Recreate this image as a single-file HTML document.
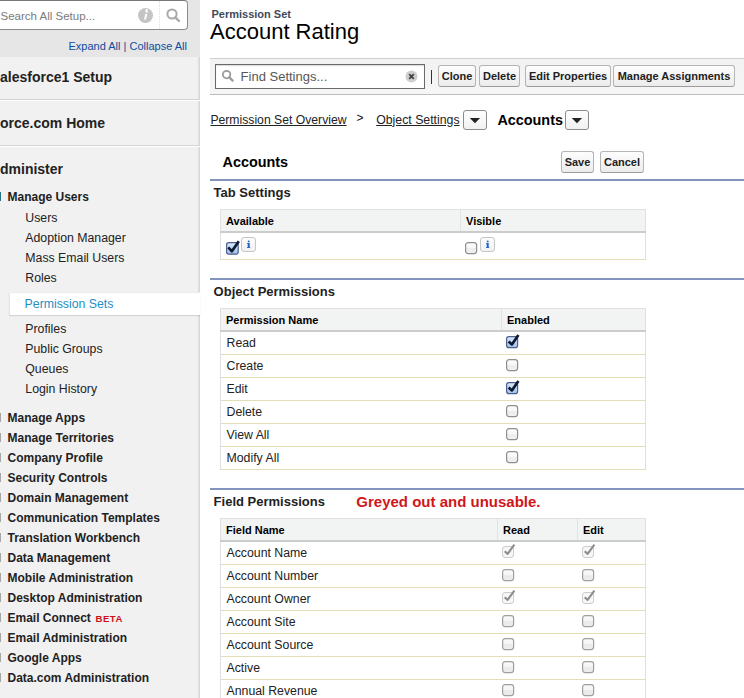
<!DOCTYPE html>
<html><head><meta charset="utf-8"><style>
html,body{margin:0;padding:0;width:744px;height:698px;overflow:hidden;background:#fff;position:relative;font-family:"Liberation Sans", sans-serif}
.t{position:absolute;white-space:nowrap}
.btn{position:absolute;box-sizing:border-box;border:1px solid #b5b5b5;border-bottom-color:#9c9c9c;border-radius:3px;background:linear-gradient(#fdfdfd,#ececec);color:#222;font-weight:bold;text-align:center;white-space:nowrap;font-family:"Liberation Sans", sans-serif}
.info{position:absolute;width:14px;height:14px;box-sizing:border-box;border:1px solid #cfcfcf;border-radius:3px;background:linear-gradient(#fbfbfb,#ececec);color:#1560c0;font:bold 11px/12px "Liberation Serif",serif;text-align:center}
</style></head><body>
<svg width="0" height="0" style="position:absolute"><defs><linearGradient id="gb" x1="0" y1="0" x2="0" y2="1"><stop offset="0" stop-color="#dbeafc"/><stop offset="1" stop-color="#9ec2ee"/></linearGradient><linearGradient id="gg" x1="0" y1="0" x2="0" y2="1"><stop offset="0" stop-color="#fefefe"/><stop offset="0.5" stop-color="#f6f6f6"/><stop offset="0.55" stop-color="#ececec"/><stop offset="1" stop-color="#f2f2f2"/></linearGradient><linearGradient id="gi" x1="0" y1="0" x2="0" y2="1"><stop offset="0" stop-color="#fdfdfd"/><stop offset="1" stop-color="#f1f1f1"/></linearGradient><linearGradient id="gd" x1="0" y1="0" x2="0" y2="1"><stop offset="0" stop-color="#fafafa"/><stop offset="0.5" stop-color="#f4f4f4"/><stop offset="0.55" stop-color="#e9e9e9"/><stop offset="1" stop-color="#efefef"/></linearGradient></defs></svg>
<div style="position:absolute;left:0px;top:0px;width:200px;height:57px;background:#e6e6e6"></div>
<div style="position:absolute;left:0px;top:57px;width:200px;height:641px;background:#f1f1f1"></div>
<div style="position:absolute;left:197px;top:57px;width:2px;height:641px;background:linear-gradient(90deg,#efefef,#e2e2e2)"></div>
<div style="position:absolute;left:199px;top:57px;width:1px;height:641px;background:#d6d6d6"></div>
<div style="position:absolute;left:-10px;top:0px;width:196px;height:28px;background:#fff;border:1px solid #8c8c8c;border-top-color:#777;border-radius:0 4px 4px 0;box-sizing:content-box"></div>
<div style="position:absolute;left:159px;top:1px;width:0px;height:28px;border-left:1px dotted #dedede"></div>
<div class="t" style="left:0.5px;top:11.07px;font-size:11.5px;line-height:11.5px;font-weight:normal;color:#7a7a7a;">Search All Setup...</div>
<svg style="position:absolute;left:137px;top:7px" width="17" height="17" viewBox="0 0 17 17"><circle cx="8.5" cy="8.5" r="7.5" fill="#c4c4c4"/><path d="M9.6 4.2a1.1 1.1 0 1 1 0.01 0z" fill="#fff"/><circle cx="9.6" cy="4.6" r="1.2" fill="#fff"/><path d="M8.3 7 L10.3 7 L9 12.6 L7 12.6 Z" fill="#fff"/></svg>
<svg style="position:absolute;left:165px;top:7px" width="17" height="17" viewBox="0 0 17 17"><circle cx="7" cy="7" r="4.6" fill="none" stroke="#a9a9a9" stroke-width="2"/><path d="M10.3 10.3 L14 14" stroke="#a9a9a9" stroke-width="2.4" stroke-linecap="round"/></svg>
<div class="t" style="left:68.5px;top:40.79px;font-size:11px;line-height:11px;font-weight:normal;color:#0f4c9c;">Expand All <span style="color:#0f4c9c">|</span> Collapse All</div>
<div style="position:absolute;left:0px;top:99px;width:200px;height:1px;background:#d3d3d3"></div>
<div style="position:absolute;left:0px;top:100px;width:200px;height:1px;background:#fff"></div>
<div style="position:absolute;left:0px;top:145px;width:200px;height:1px;background:#d3d3d3"></div>
<div style="position:absolute;left:0px;top:146px;width:200px;height:1px;background:#fff"></div>
<div class="t" style="left:0px;top:70.15px;font-size:14px;line-height:14px;font-weight:bold;color:#222;">alesforce1 Setup</div>
<div class="t" style="left:0px;top:116.15px;font-size:14px;line-height:14px;font-weight:bold;color:#222;">orce.com Home</div>
<div class="t" style="left:0px;top:161.65px;font-size:14px;line-height:14px;font-weight:bold;color:#222;">dminister</div>
<div style="position:absolute;left:0px;top:192px;width:1px;height:9px;background:#2a7080"></div>
<div class="t" style="left:7.5px;top:190.84px;font-size:12px;line-height:12px;font-weight:bold;color:#222;">Manage Users</div>
<div class="t" style="left:25.3px;top:211.59px;font-size:12.3px;line-height:12.3px;font-weight:normal;color:#222;">Users</div>
<div class="t" style="left:25.3px;top:231.59px;font-size:12.3px;line-height:12.3px;font-weight:normal;color:#222;">Adoption Manager</div>
<div class="t" style="left:25.3px;top:251.59px;font-size:12.3px;line-height:12.3px;font-weight:normal;color:#222;">Mass Email Users</div>
<div class="t" style="left:25.3px;top:271.59px;font-size:12.3px;line-height:12.3px;font-weight:normal;color:#222;">Roles</div>
<div style="position:absolute;left:8.5px;top:291.5px;width:191.5px;height:23.5px;background:#fff;box-shadow:0 1px 1px rgba(0,0,0,0.12);border-left:1px solid #e6e6e6;border-top:1px solid #ececec;box-sizing:border-box"></div>
<div class="t" style="left:24.6px;top:297.59px;font-size:12.3px;line-height:12.3px;font-weight:normal;color:#1f8fc4;">Permission Sets</div>
<div class="t" style="left:25.3px;top:322.59px;font-size:12.3px;line-height:12.3px;font-weight:normal;color:#222;">Profiles</div>
<div class="t" style="left:25.3px;top:342.59px;font-size:12.3px;line-height:12.3px;font-weight:normal;color:#222;">Public Groups</div>
<div class="t" style="left:25.3px;top:362.59px;font-size:12.3px;line-height:12.3px;font-weight:normal;color:#222;">Queues</div>
<div class="t" style="left:25.3px;top:382.59px;font-size:12.3px;line-height:12.3px;font-weight:normal;color:#222;">Login History</div>
<div style="position:absolute;left:0px;top:413px;width:1px;height:9px;background:#a6a6a6"></div>
<div class="t" style="left:7.5px;top:411.84px;font-size:12px;line-height:12px;font-weight:bold;color:#222;">Manage Apps</div>
<div style="position:absolute;left:0px;top:433px;width:1px;height:9px;background:#a6a6a6"></div>
<div class="t" style="left:7.5px;top:431.84px;font-size:12px;line-height:12px;font-weight:bold;color:#222;">Manage Territories</div>
<div style="position:absolute;left:0px;top:453px;width:1px;height:9px;background:#a6a6a6"></div>
<div class="t" style="left:7.5px;top:451.84px;font-size:12px;line-height:12px;font-weight:bold;color:#222;">Company Profile</div>
<div style="position:absolute;left:0px;top:473px;width:1px;height:9px;background:#a6a6a6"></div>
<div class="t" style="left:7.5px;top:471.84px;font-size:12px;line-height:12px;font-weight:bold;color:#222;">Security Controls</div>
<div style="position:absolute;left:0px;top:493px;width:1px;height:9px;background:#a6a6a6"></div>
<div class="t" style="left:7.5px;top:491.84px;font-size:12px;line-height:12px;font-weight:bold;color:#222;">Domain Management</div>
<div style="position:absolute;left:0px;top:513px;width:1px;height:9px;background:#a6a6a6"></div>
<div class="t" style="left:7.5px;top:511.84px;font-size:12px;line-height:12px;font-weight:bold;color:#222;">Communication Templates</div>
<div style="position:absolute;left:0px;top:533px;width:1px;height:9px;background:#a6a6a6"></div>
<div class="t" style="left:7.5px;top:531.84px;font-size:12px;line-height:12px;font-weight:bold;color:#222;">Translation Workbench</div>
<div style="position:absolute;left:0px;top:553px;width:1px;height:9px;background:#a6a6a6"></div>
<div class="t" style="left:7.5px;top:551.84px;font-size:12px;line-height:12px;font-weight:bold;color:#222;">Data Management</div>
<div style="position:absolute;left:0px;top:573px;width:1px;height:9px;background:#a6a6a6"></div>
<div class="t" style="left:7.5px;top:571.84px;font-size:12px;line-height:12px;font-weight:bold;color:#222;">Mobile Administration</div>
<div style="position:absolute;left:0px;top:593px;width:1px;height:9px;background:#a6a6a6"></div>
<div class="t" style="left:7.5px;top:591.84px;font-size:12px;line-height:12px;font-weight:bold;color:#222;">Desktop Administration</div>
<div style="position:absolute;left:0px;top:613px;width:1px;height:9px;background:#a6a6a6"></div>
<div class="t" style="left:7.5px;top:611.84px;font-size:12px;line-height:12px;font-weight:bold;color:#222;">Email Connect</div>
<div style="position:absolute;left:0px;top:633px;width:1px;height:9px;background:#a6a6a6"></div>
<div class="t" style="left:7.5px;top:631.84px;font-size:12px;line-height:12px;font-weight:bold;color:#222;">Email Administration</div>
<div style="position:absolute;left:0px;top:653px;width:1px;height:9px;background:#a6a6a6"></div>
<div class="t" style="left:7.5px;top:651.84px;font-size:12px;line-height:12px;font-weight:bold;color:#222;">Google Apps</div>
<div style="position:absolute;left:0px;top:673px;width:1px;height:9px;background:#a6a6a6"></div>
<div class="t" style="left:7.5px;top:671.84px;font-size:12px;line-height:12px;font-weight:bold;color:#222;">Data.com Administration</div>
<div class="t" style="left:95.5px;top:614.47px;font-size:9.6px;line-height:9.6px;font-weight:bold;color:#cc1019;letter-spacing:0.5px">BETA</div>
<div class="t" style="left:211.5px;top:9.29px;font-size:11px;line-height:11px;font-weight:bold;color:#3f4a5a;">Permission Set</div>
<div class="t" style="left:210px;top:21.08px;font-size:22px;line-height:22px;font-weight:normal;color:#000;">Account Rating</div>
<div style="position:absolute;left:210px;top:58px;width:534px;height:37px;background:linear-gradient(#f2f2f2,#f6f6f6);border-top:1px solid #cfcfcf;border-bottom:1px solid #bdbdbd;box-sizing:border-box"></div>
<div style="position:absolute;left:215px;top:64px;width:210px;height:25px;background:#fff;border:1px solid #6a6a6a;box-sizing:border-box;box-shadow:inset 0 1px 1px rgba(0,0,0,0.15)"></div>
<svg style="position:absolute;left:221px;top:69px" width="14" height="14" viewBox="0 0 14 14"><circle cx="5.6" cy="5.6" r="3.7" fill="none" stroke="#999" stroke-width="1.8"/><path d="M8.3 8.3 L11.6 11.6" stroke="#999" stroke-width="2.2" stroke-linecap="round"/></svg>
<div class="t" style="left:240.6px;top:70.00px;font-size:13px;line-height:13px;font-weight:normal;color:#575757;">Find Settings...</div>
<svg style="position:absolute;left:405px;top:70px" width="13" height="13" viewBox="0 0 13 13"><circle cx="6.5" cy="6.5" r="6" fill="#cfcfcf"/><path d="M4.2 4.2 L8.8 8.8 M8.8 4.2 L4.2 8.8" stroke="#444" stroke-width="1.8"/></svg>
<div style="position:absolute;left:431px;top:70px;width:1px;height:14px;background:#333"></div>
<div class="btn" style="left:438px;top:65px;width:38px;height:22px;font-size:11px;line-height:20px">Clone</div>
<div class="btn" style="left:479px;top:65px;width:41px;height:22px;font-size:11px;line-height:20px">Delete</div>
<div class="btn" style="left:525px;top:65px;width:86px;height:22px;font-size:11px;line-height:20px">Edit Properties</div>
<div class="btn" style="left:613px;top:65px;width:122px;height:22px;font-size:11px;line-height:20px">Manage Assignments</div>
<div class="t" style="left:210.4px;top:113.67px;font-size:12.2px;line-height:12.2px;font-weight:normal;color:#222;text-decoration:underline">Permission Set Overview</div>
<div class="t" style="left:356.5px;top:112.14px;font-size:12px;line-height:12px;font-weight:normal;color:#111;">&gt;</div>
<div class="t" style="left:376.2px;top:113.59px;font-size:12.3px;line-height:12.3px;font-weight:normal;color:#222;text-decoration:underline">Object Settings</div>
<div class="btn" style="left:463px;top:110px;width:24px;height:20px;border-color:#8c8c8c;background:linear-gradient(#fefefe,#f1f1f1)"><svg width="24" height="20" style="position:absolute;left:-1px;top:-1px"><path d="M6.8 8 L17.1 8 L11.95 13.2 Z" fill="#222"/></svg></div>
<div class="t" style="left:497.4px;top:112.81px;font-size:14.4px;line-height:14.4px;font-weight:bold;color:#000;">Accounts</div>
<div class="btn" style="left:565px;top:110px;width:24px;height:20px;border-color:#8c8c8c;background:linear-gradient(#fefefe,#f1f1f1)"><svg width="24" height="20" style="position:absolute;left:-1px;top:-1px"><path d="M6.8 8 L17.1 8 L11.95 13.2 Z" fill="#222"/></svg></div>
<div class="t" style="left:222.5px;top:154.81px;font-size:14.4px;line-height:14.4px;font-weight:bold;color:#000;">Accounts</div>
<div class="btn" style="left:561px;top:151px;width:33px;height:22px;font-size:11px;line-height:20px">Save</div>
<div class="btn" style="left:600px;top:151px;width:44px;height:22px;font-size:11px;line-height:20px">Cancel</div>
<div style="position:absolute;left:210px;top:179px;width:534px;height:2px;background:#8395bd"></div>
<div class="t" style="left:213.6px;top:185.70px;font-size:13px;line-height:13px;font-weight:bold;color:#222;">Tab Settings</div>
<div style="position:absolute;left:210px;top:278px;width:534px;height:2px;background:#8395bd"></div>
<div class="t" style="left:213.6px;top:284.80px;font-size:13px;line-height:13px;font-weight:bold;color:#222;">Object Permissions</div>
<div style="position:absolute;left:210px;top:488px;width:534px;height:2px;background:#8395bd"></div>
<div class="t" style="left:213.6px;top:494.70px;font-size:13px;line-height:13px;font-weight:bold;color:#222;">Field Permissions</div>
<div class="t" style="left:356.3px;top:494.30px;font-size:15px;line-height:15px;font-weight:bold;color:#d0161b;">Greyed out and unusable.</div>
<div style="position:absolute;left:220px;top:209px;width:426px;height:51px;border:1px solid #e0e0e0;border-bottom-color:#e3deb8;box-sizing:border-box;background:#fff"></div>
<div style="position:absolute;left:221px;top:210px;width:424px;height:22px;background:#f2f3f3"></div>
<div style="position:absolute;left:220px;top:231px;width:426px;height:2px;background:#cccccc"></div>
<div class="t" style="left:226px;top:215.99px;font-size:11px;line-height:11px;font-weight:bold;color:#000;">Available</div>
<div style="position:absolute;left:460px;top:210px;width:1px;height:21px;background:#e0e3e5"></div>
<div class="t" style="left:466px;top:215.99px;font-size:11px;line-height:11px;font-weight:bold;color:#000;">Visible</div>

<svg width="16" height="16" viewBox="0 0 16 16" style="position:absolute;left:226px;top:240px;overflow:visible"><rect x="0.6" y="2.6" width="11.6" height="11.6" rx="2.2" fill="url(#gb)" stroke="#4f5f8c" stroke-width="1.2"/><path d="M2.2 7.4 L5.9 11.2 L12.8 1.2" fill="none" stroke="#0f1a30" stroke-width="2.7" stroke-linejoin="round"/></svg>
<svg width="15" height="15" viewBox="0 0 15 15" style="position:absolute;left:241px;top:237px"><rect x="0.5" y="0.5" width="14" height="14" rx="2.5" fill="url(#gi)" stroke="#c6c6c6"/><circle cx="7.7" cy="4.4" r="0.95" fill="#2a5db0"/><path d="M5.9 6 H8.7 V10.2 H9.3 V11.1 H5.9 V10.2 H6.7 V6.8 H5.9 Z" fill="#1f63c4"/></svg>
<svg width="13" height="13" viewBox="0 0 13 13" style="position:absolute;left:465px;top:242px"><rect x="0.6" y="0.6" width="11" height="11" rx="2.5" fill="url(#gg)" stroke="#8f8f8f" stroke-width="1.2"/></svg>
<svg width="15" height="15" viewBox="0 0 15 15" style="position:absolute;left:480px;top:237px"><rect x="0.5" y="0.5" width="14" height="14" rx="2.5" fill="url(#gi)" stroke="#c6c6c6"/><circle cx="7.7" cy="4.4" r="0.95" fill="#2a5db0"/><path d="M5.9 6 H8.7 V10.2 H9.3 V11.1 H5.9 V10.2 H6.7 V6.8 H5.9 Z" fill="#1f63c4"/></svg>
<div style="position:absolute;left:220px;top:308px;width:426px;height:162px;border:1px solid #e0e0e0;border-bottom-color:#e3deb8;box-sizing:border-box;background:#fff"></div>
<div style="position:absolute;left:221px;top:309px;width:424px;height:22px;background:#f2f3f3"></div>
<div style="position:absolute;left:220px;top:330px;width:426px;height:2px;background:#cccccc"></div>
<div class="t" style="left:226px;top:314.99px;font-size:11px;line-height:11px;font-weight:bold;color:#000;">Permission Name</div>
<div style="position:absolute;left:501px;top:309px;width:1px;height:21px;background:#e0e3e5"></div>
<div class="t" style="left:507px;top:314.99px;font-size:11px;line-height:11px;font-weight:bold;color:#000;">Enabled</div>
<div style="position:absolute;left:221px;top:354px;width:424px;height:1px;background:#e3deb8"></div>
<div style="position:absolute;left:221px;top:377px;width:424px;height:1px;background:#e3deb8"></div>
<div style="position:absolute;left:221px;top:400px;width:424px;height:1px;background:#e3deb8"></div>
<div style="position:absolute;left:221px;top:423px;width:424px;height:1px;background:#e3deb8"></div>
<div style="position:absolute;left:221px;top:446px;width:424px;height:1px;background:#e3deb8"></div>
<div class="t" style="left:226.5px;top:337.19px;font-size:12.3px;line-height:12.3px;font-weight:normal;color:#222;">Read</div>
<svg width="16" height="16" viewBox="0 0 16 16" style="position:absolute;left:506px;top:334px;overflow:visible"><rect x="0.6" y="2.6" width="11" height="11" rx="2.2" fill="url(#gb)" stroke="#4f5f8c" stroke-width="1.2"/><path d="M2.6 7.4 L5.9 10.4 L12.4 0.9" fill="none" stroke="#0f1a30" stroke-width="2.7" stroke-linejoin="round"/></svg>
<div class="t" style="left:226.5px;top:360.19px;font-size:12.3px;line-height:12.3px;font-weight:normal;color:#222;">Create</div>
<svg width="13" height="13" viewBox="0 0 13 13" style="position:absolute;left:506px;top:359px"><rect x="0.6" y="0.6" width="11" height="11" rx="2.5" fill="url(#gg)" stroke="#8f8f8f" stroke-width="1.2"/></svg>
<div class="t" style="left:226.5px;top:383.19px;font-size:12.3px;line-height:12.3px;font-weight:normal;color:#222;">Edit</div>
<svg width="16" height="16" viewBox="0 0 16 16" style="position:absolute;left:506px;top:380px;overflow:visible"><rect x="0.6" y="2.6" width="11" height="11" rx="2.2" fill="url(#gb)" stroke="#4f5f8c" stroke-width="1.2"/><path d="M2.6 7.4 L5.9 10.4 L12.4 0.9" fill="none" stroke="#0f1a30" stroke-width="2.7" stroke-linejoin="round"/></svg>
<div class="t" style="left:226.5px;top:406.19px;font-size:12.3px;line-height:12.3px;font-weight:normal;color:#222;">Delete</div>
<svg width="13" height="13" viewBox="0 0 13 13" style="position:absolute;left:506px;top:405px"><rect x="0.6" y="0.6" width="11" height="11" rx="2.5" fill="url(#gg)" stroke="#8f8f8f" stroke-width="1.2"/></svg>
<div class="t" style="left:226.5px;top:429.19px;font-size:12.3px;line-height:12.3px;font-weight:normal;color:#222;">View All</div>
<svg width="13" height="13" viewBox="0 0 13 13" style="position:absolute;left:506px;top:428px"><rect x="0.6" y="0.6" width="11" height="11" rx="2.5" fill="url(#gg)" stroke="#8f8f8f" stroke-width="1.2"/></svg>
<div class="t" style="left:226.5px;top:452.19px;font-size:12.3px;line-height:12.3px;font-weight:normal;color:#222;">Modify All</div>
<svg width="13" height="13" viewBox="0 0 13 13" style="position:absolute;left:506px;top:451px"><rect x="0.6" y="0.6" width="11" height="11" rx="2.5" fill="url(#gg)" stroke="#8f8f8f" stroke-width="1.2"/></svg>
<div style="position:absolute;left:220px;top:518px;width:426px;height:208px;border:1px solid #e0e0e0;border-bottom-color:#e3deb8;box-sizing:border-box;background:#fff"></div>
<div style="position:absolute;left:221px;top:519px;width:424px;height:22px;background:#f2f3f3"></div>
<div style="position:absolute;left:220px;top:540px;width:426px;height:2px;background:#cccccc"></div>
<div class="t" style="left:226px;top:524.99px;font-size:11px;line-height:11px;font-weight:bold;color:#000;">Field Name</div>
<div style="position:absolute;left:497px;top:519px;width:1px;height:21px;background:#e0e3e5"></div>
<div class="t" style="left:503px;top:524.99px;font-size:11px;line-height:11px;font-weight:bold;color:#000;">Read</div>
<div style="position:absolute;left:577px;top:519px;width:1px;height:21px;background:#e0e3e5"></div>
<div class="t" style="left:583px;top:524.99px;font-size:11px;line-height:11px;font-weight:bold;color:#000;">Edit</div>
<div style="position:absolute;left:221px;top:564px;width:424px;height:1px;background:#e3deb8"></div>
<div style="position:absolute;left:221px;top:587px;width:424px;height:1px;background:#e3deb8"></div>
<div style="position:absolute;left:221px;top:610px;width:424px;height:1px;background:#e3deb8"></div>
<div style="position:absolute;left:221px;top:633px;width:424px;height:1px;background:#e3deb8"></div>
<div style="position:absolute;left:221px;top:656px;width:424px;height:1px;background:#e3deb8"></div>
<div style="position:absolute;left:221px;top:679px;width:424px;height:1px;background:#e3deb8"></div>
<div style="position:absolute;left:221px;top:702px;width:424px;height:1px;background:#e3deb8"></div>
<div class="t" style="left:226.5px;top:546.89px;font-size:12.3px;line-height:12.3px;font-weight:normal;color:#222;">Account Name</div>
<svg width="16" height="16" viewBox="0 0 16 16" style="position:absolute;left:502px;top:544px;overflow:visible"><rect x="0.5" y="2.5" width="11" height="11" rx="2.5" fill="#f7f7f7" stroke="#cdcdcd"/><path d="M2.7 7.3 L5.6 9.9 L12.4 0.6" fill="none" stroke="#8e8e8e" stroke-width="2.1" stroke-linejoin="round"/></svg>
<svg width="16" height="16" viewBox="0 0 16 16" style="position:absolute;left:582px;top:544px;overflow:visible"><rect x="0.5" y="2.5" width="11" height="11" rx="2.5" fill="#f7f7f7" stroke="#cdcdcd"/><path d="M2.7 7.3 L5.6 9.9 L12.4 0.6" fill="none" stroke="#8e8e8e" stroke-width="2.1" stroke-linejoin="round"/></svg>
<div class="t" style="left:226.5px;top:569.89px;font-size:12.3px;line-height:12.3px;font-weight:normal;color:#222;">Account Number</div>
<svg width="13" height="13" viewBox="0 0 13 13" style="position:absolute;left:502px;top:569px"><rect x="0.6" y="0.6" width="11" height="11" rx="2.5" fill="url(#gd)" stroke="#a0a0a0" stroke-width="1.2"/></svg>
<svg width="13" height="13" viewBox="0 0 13 13" style="position:absolute;left:582px;top:569px"><rect x="0.6" y="0.6" width="11" height="11" rx="2.5" fill="url(#gd)" stroke="#a0a0a0" stroke-width="1.2"/></svg>
<div class="t" style="left:226.5px;top:592.89px;font-size:12.3px;line-height:12.3px;font-weight:normal;color:#222;">Account Owner</div>
<svg width="16" height="16" viewBox="0 0 16 16" style="position:absolute;left:502px;top:590px;overflow:visible"><rect x="0.5" y="2.5" width="11" height="11" rx="2.5" fill="#f7f7f7" stroke="#cdcdcd"/><path d="M2.7 7.3 L5.6 9.9 L12.4 0.6" fill="none" stroke="#8e8e8e" stroke-width="2.1" stroke-linejoin="round"/></svg>
<svg width="16" height="16" viewBox="0 0 16 16" style="position:absolute;left:582px;top:590px;overflow:visible"><rect x="0.5" y="2.5" width="11" height="11" rx="2.5" fill="#f7f7f7" stroke="#cdcdcd"/><path d="M2.7 7.3 L5.6 9.9 L12.4 0.6" fill="none" stroke="#8e8e8e" stroke-width="2.1" stroke-linejoin="round"/></svg>
<div class="t" style="left:226.5px;top:615.89px;font-size:12.3px;line-height:12.3px;font-weight:normal;color:#222;">Account Site</div>
<svg width="13" height="13" viewBox="0 0 13 13" style="position:absolute;left:502px;top:615px"><rect x="0.6" y="0.6" width="11" height="11" rx="2.5" fill="url(#gd)" stroke="#a0a0a0" stroke-width="1.2"/></svg>
<svg width="13" height="13" viewBox="0 0 13 13" style="position:absolute;left:582px;top:615px"><rect x="0.6" y="0.6" width="11" height="11" rx="2.5" fill="url(#gd)" stroke="#a0a0a0" stroke-width="1.2"/></svg>
<div class="t" style="left:226.5px;top:638.89px;font-size:12.3px;line-height:12.3px;font-weight:normal;color:#222;">Account Source</div>
<svg width="13" height="13" viewBox="0 0 13 13" style="position:absolute;left:502px;top:638px"><rect x="0.6" y="0.6" width="11" height="11" rx="2.5" fill="url(#gd)" stroke="#a0a0a0" stroke-width="1.2"/></svg>
<svg width="13" height="13" viewBox="0 0 13 13" style="position:absolute;left:582px;top:638px"><rect x="0.6" y="0.6" width="11" height="11" rx="2.5" fill="url(#gd)" stroke="#a0a0a0" stroke-width="1.2"/></svg>
<div class="t" style="left:226.5px;top:661.89px;font-size:12.3px;line-height:12.3px;font-weight:normal;color:#222;">Active</div>
<svg width="13" height="13" viewBox="0 0 13 13" style="position:absolute;left:502px;top:661px"><rect x="0.6" y="0.6" width="11" height="11" rx="2.5" fill="url(#gd)" stroke="#a0a0a0" stroke-width="1.2"/></svg>
<svg width="13" height="13" viewBox="0 0 13 13" style="position:absolute;left:582px;top:661px"><rect x="0.6" y="0.6" width="11" height="11" rx="2.5" fill="url(#gd)" stroke="#a0a0a0" stroke-width="1.2"/></svg>
<div class="t" style="left:226.5px;top:684.89px;font-size:12.3px;line-height:12.3px;font-weight:normal;color:#222;">Annual Revenue</div>
<svg width="13" height="13" viewBox="0 0 13 13" style="position:absolute;left:502px;top:684px"><rect x="0.6" y="0.6" width="11" height="11" rx="2.5" fill="url(#gd)" stroke="#a0a0a0" stroke-width="1.2"/></svg>
<svg width="13" height="13" viewBox="0 0 13 13" style="position:absolute;left:582px;top:684px"><rect x="0.6" y="0.6" width="11" height="11" rx="2.5" fill="url(#gd)" stroke="#a0a0a0" stroke-width="1.2"/></svg>
</body></html>
